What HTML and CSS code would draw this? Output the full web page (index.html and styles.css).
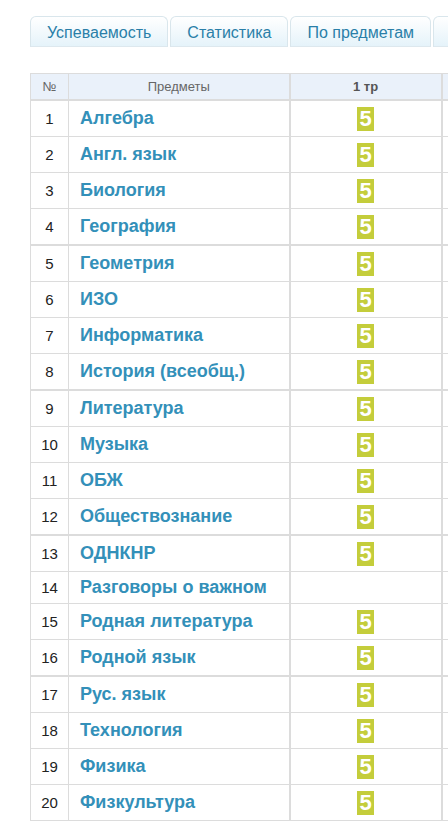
FILE: index.html
```html
<!DOCTYPE html>
<html lang="ru">
<head>
<meta charset="utf-8">
<link rel="stylesheet" href="styles.css">
</head>
<body>
<div class="page">
  <div class="tabs">
    <div class="tab">Успеваемость</div>
    <div class="tab">Статистика</div>
    <div class="tab">По предметам</div>
    <div class="tab tab-more"></div>
  </div>
  <table class="grades">
    <colgroup><col class="c-num"><col class="c-subj"><col class="c-grade"><col class="c-grade"></colgroup>
    <thead>
      <tr><th>№</th><th>Предметы</th><th class="term">1 тр</th><th class="term"></th></tr>
    </thead>
    <tbody>
      <tr><td class="num">1</td><td class="subj">Алгебра</td><td class="g"><span class="mark">5</span></td><td class="g"></td></tr>
      <tr><td class="num">2</td><td class="subj">Англ. язык</td><td class="g"><span class="mark">5</span></td><td class="g"></td></tr>
      <tr><td class="num">3</td><td class="subj">Биология</td><td class="g"><span class="mark">5</span></td><td class="g"></td></tr>
      <tr><td class="num">4</td><td class="subj">География</td><td class="g"><span class="mark">5</span></td><td class="g"></td></tr>
      <tr class="grp"><td class="num">5</td><td class="subj">Геометрия</td><td class="g"><span class="mark">5</span></td><td class="g"></td></tr>
      <tr><td class="num">6</td><td class="subj">ИЗО</td><td class="g"><span class="mark">5</span></td><td class="g"></td></tr>
      <tr><td class="num">7</td><td class="subj">Информатика</td><td class="g"><span class="mark">5</span></td><td class="g"></td></tr>
      <tr><td class="num">8</td><td class="subj">История (всеобщ.)</td><td class="g"><span class="mark">5</span></td><td class="g"></td></tr>
      <tr class="grp"><td class="num">9</td><td class="subj">Литература</td><td class="g"><span class="mark">5</span></td><td class="g"></td></tr>
      <tr><td class="num">10</td><td class="subj">Музыка</td><td class="g"><span class="mark">5</span></td><td class="g"></td></tr>
      <tr><td class="num">11</td><td class="subj">ОБЖ</td><td class="g"><span class="mark">5</span></td><td class="g"></td></tr>
      <tr><td class="num">12</td><td class="subj">Обществознание</td><td class="g"><span class="mark">5</span></td><td class="g"></td></tr>
      <tr class="grp"><td class="num">13</td><td class="subj">ОДНКНР</td><td class="g"><span class="mark">5</span></td><td class="g"></td></tr>
      <tr class="short"><td class="num">14</td><td class="subj">Разговоры о важном</td><td class="g"></td><td class="g"></td></tr>
      <tr><td class="num">15</td><td class="subj">Родная литература</td><td class="g"><span class="mark">5</span></td><td class="g"></td></tr>
      <tr><td class="num">16</td><td class="subj">Родной язык</td><td class="g"><span class="mark">5</span></td><td class="g"></td></tr>
      <tr class="grp"><td class="num">17</td><td class="subj">Рус. язык</td><td class="g"><span class="mark">5</span></td><td class="g"></td></tr>
      <tr><td class="num">18</td><td class="subj">Технология</td><td class="g"><span class="mark">5</span></td><td class="g"></td></tr>
      <tr><td class="num">19</td><td class="subj">Физика</td><td class="g"><span class="mark">5</span></td><td class="g"></td></tr>
      <tr><td class="num">20</td><td class="subj">Физкультура</td><td class="g"><span class="mark">5</span></td><td class="g"></td></tr>
    </tbody>
  </table>
</div>
</body>
</html>
```
FILE: styles.css
```css
html, body {
  margin: 0;
  padding: 0;
  background: #fff;
  overflow: hidden;
}
body {
  font-family: "Liberation Sans", Arial, sans-serif;
  color: #333;
}
.page {
  padding: 16px 0 0 30px;
  width: 700px;
}
.tabs {
  display: flex;
  gap: 2px;
  height: 31px;
}
.tab {
  box-sizing: border-box;
  height: 31px;
  padding: 0 16px;
  line-height: 31px;
  font-size: 16px;
  color: #2a7fa8;
  border: 1px solid #d9e6ec;
  border-bottom-color: #dde8ee;
  border-radius: 6px 6px 0 0;
  background: linear-gradient(#ffffff, #e5f3fa);
  white-space: nowrap;
}
.tab-more { width: 110px; }
.grades {
  margin-top: 26px;
  border-collapse: collapse;
  table-layout: fixed;
  width: 563px;
}
.c-num { width: 38px; }
.c-subj { width: 221px; }
.c-grade { width: 152px; }
.grades th {
  height: 25px;
  padding: 0;
  background: #eaf1fa;
  border: 1px solid #dcdcdc;
  border-bottom: 2px solid #dcdcdc;
  font-size: 13px;
  font-weight: normal;
  color: #666;
  text-align: center;
}
.grades th.term {
  font-weight: bold;
  color: #555;
  border-left-width: 2px;
  border-right-width: 2px;
}
.grades td {
  height: 35px;
  padding: 0;
  border: 1px solid #dcdcdc;
  vertical-align: middle;
}
.grades tr.short td { height: 31px; }
.grades tr.grp td { border-top: 2px solid #dcdcdc; }
.grades td.g {
  text-align: center;
  border-left-width: 2px;
  border-right-width: 2px;
}
.grades td.num {
  text-align: center;
  font-size: 15px;
  color: #222;
}
.grades td.subj {
  padding-left: 11px;
  font-size: 18px;
  font-weight: bold;
  color: #3390b9;
  white-space: nowrap;
}
.mark {
  display: inline-block;
  width: 17px;
  height: 24px;
  line-height: 24px;
  background: #c4cd3b;
  color: #fff;
  font-size: 22px;
  font-weight: bold;
  text-align: center;
  vertical-align: middle;
}
```
